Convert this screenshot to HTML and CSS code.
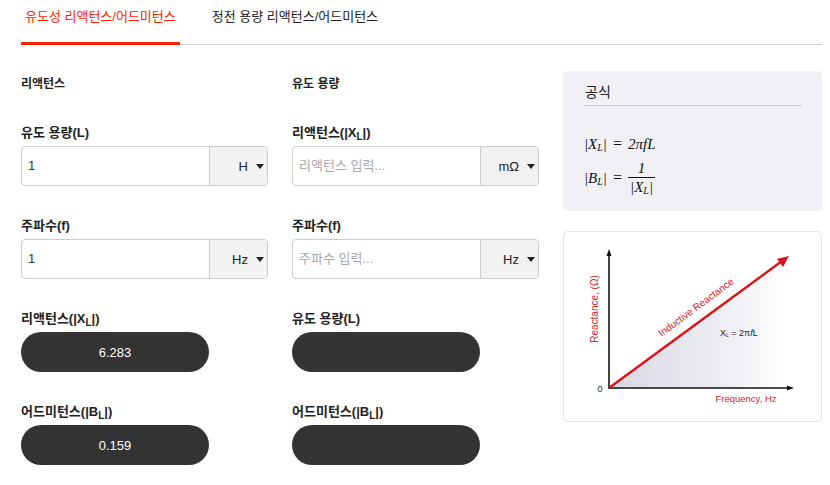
FILE: index.html
```html
<!DOCTYPE html>
<html lang="ko">
<head>
<meta charset="utf-8">
<title>유도성 리액턴스/어드미턴스</title>
<link rel="stylesheet" href="styles.css">
</head>
<body>
<div class="page">
  <nav class="tabs">
    <a class="tab active">유도성 리액턴스/어드미턴스</a>
    <a class="tab">정전 용량 리액턴스/어드미턴스</a>
  </nav>
  <div class="main">
    <div class="calc">
      <div class="col">
        <div class="heading">리액턴스</div>
        <div class="field">
          <div class="label">유도 용량(L)</div>
          <div class="control">
            <div class="input">1</div>
            <div class="select">H<span class="caret"></span></div>
          </div>
        </div>
        <div class="field">
          <div class="label">주파수(f)</div>
          <div class="control">
            <div class="input">1</div>
            <div class="select">Hz<span class="caret"></span></div>
          </div>
        </div>
        <div class="field">
          <div class="label">리액턴스(|X<sub>L</sub>|)</div>
          <div class="pill">6.283</div>
        </div>
        <div class="field">
          <div class="label">어드미턴스(|B<sub>L</sub>|)</div>
          <div class="pill">0.159</div>
        </div>
      </div>
      <div class="col">
        <div class="heading">유도 용량</div>
        <div class="field">
          <div class="label">리액턴스(|X<sub>L</sub>|)</div>
          <div class="control">
            <div class="input placeholder">리액턴스 입력...</div>
            <div class="select">mΩ<span class="caret"></span></div>
          </div>
        </div>
        <div class="field">
          <div class="label">주파수(f)</div>
          <div class="control">
            <div class="input placeholder">주파수 입력...</div>
            <div class="select">Hz<span class="caret"></span></div>
          </div>
        </div>
        <div class="field">
          <div class="label">유도 용량(L)</div>
          <div class="pill"></div>
        </div>
        <div class="field">
          <div class="label">어드미턴스(|B<sub>L</sub>|)</div>
          <div class="pill"></div>
        </div>
      </div>
    </div>
    <aside class="side">
      <div class="card formula">
        <div class="card-title">공식</div>
        <div class="eq eq1"><span class="m">|X<sub>L</sub>|</span><span class="op">=</span><span class="m">2πfL</span></div>
        <div class="eq eq2"><span class="m">|B<sub>L</sub>|</span><span class="op">=</span><span class="frac"><span class="num m">1</span><span class="den m">|X<sub>L</sub>|</span></span></div>
      </div>
      <div class="card chart">
        <svg width="257" height="189" viewBox="0 0 257 189" xmlns="http://www.w3.org/2000/svg">
          <defs>
            <linearGradient id="g" x1="0" y1="0" x2="1" y2="0">
              <stop offset="0" stop-color="#d8d8e2"/>
              <stop offset="0.6" stop-color="#ececf2"/>
              <stop offset="1" stop-color="#ffffff"/>
            </linearGradient>
          </defs>
          <polygon points="45,156 222,26 222,156" fill="url(#g)"/>
          <line x1="45" y1="157" x2="45" y2="22" stroke="#111" stroke-width="1.6"/>
          <polygon points="45,17 42.5,24 47.5,24" fill="#111"/>
          <line x1="45" y1="156" x2="225" y2="156" stroke="#111" stroke-width="1.6"/>
          <polygon points="230,156 223,153.5 223,158.5" fill="#111"/>
          <line x1="45" y1="156" x2="218" y2="29" stroke="#d7141a" stroke-width="2.4"/>
          <polygon points="225,24 213,27 219,35" fill="#d7141a"/>
          <text x="34" y="77" transform="rotate(-90 34 77)" text-anchor="middle" class="red lg">Reactance, (Ω)</text>
          <text x="36" y="160" text-anchor="middle" class="blk">0</text>
          <text x="182" y="170" text-anchor="middle" class="red">Frequency, Hz</text>
          <text x="134" y="78" transform="rotate(-36.5 134 78)" text-anchor="middle" class="red lg">Inductive Reactance</text>
          <text x="156" y="104" class="blk">X<tspan font-size="5" dy="1">L</tspan><tspan dy="-1"> = 2π</tspan><tspan font-style="italic">f</tspan>L</text>
        </svg>
      </div>
    </aside>
  </div>
</div>
</body>
</html>
```

FILE: styles.css
```css
* { box-sizing: border-box; }
body {
  margin: 0;
  background: #fff;
  font-family: "Liberation Sans", Arial, "Noto Sans CJK KR", sans-serif;
  color: #222;
}
.page {
  padding: 0 8px 0 21px;
}
.tabs {
  display: flex;
  gap: 28px;
  border-bottom: 1px solid #cfcfcf;
  height: 45px;
}
.tab {
  font-size: 13px;
  line-height: 34px;
  padding: 0 4px;
  color: #222;
  margin-bottom: -1px;
  border-bottom: 3px solid transparent;
}
.tab.active {
  color: #ff2200;
  border-bottom-color: #ff2200;
}
.main {
  display: flex;
  gap: 24px;
  padding-top: 26px;
}
.calc {
  display: grid;
  grid-template-columns: 247px 247px;
  column-gap: 24px;
  padding-top: 4px;
}
.heading {
  font-size: 12px;
  font-weight: bold;
  line-height: 18px;
}
.field {
  margin-top: 31px;
}
.label {
  font-size: 13px;
  font-weight: bold;
  line-height: 18px;
  margin-bottom: 4px;
}
.label sub {
  font-size: 10px;
  vertical-align: -3px;
  line-height: 0;
}
.control {
  display: flex;
  height: 40px;
  border: 1px solid #cccccc;
  border-radius: 4px;
  overflow: hidden;
}
.input {
  flex: 1;
  padding-left: 6px;
  font-size: 13px;
  line-height: 38px;
  color: #333;
}
.input.placeholder {
  color: #a8a8a8;
}
.select {
  width: 58px;
  background: #f2f2f2;
  border-left: 1px solid #cccccc;
  display: flex;
  align-items: center;
  justify-content: flex-end;
  padding-right: 3px;
  font-size: 13px;
  color: #222;
}
.caret {
  width: 0;
  height: 0;
  border-left: 4px solid transparent;
  border-right: 4px solid transparent;
  border-top: 5px solid #222;
  margin-left: 8px;
}
.pill {
  width: 188px;
  height: 40px;
  border-radius: 20px;
  background: #333333;
  color: #fff;
  font-size: 13px;
  display: flex;
  align-items: center;
  justify-content: center;
}
.side {
  width: 259px;
  display: flex;
  flex-direction: column;
  gap: 20px;
}
.card {
  border-radius: 5px;
}
.formula {
  background: #f0f0f5;
  height: 140px;
  padding: 10px 20px 0 21px;
}
.card-title {
  font-size: 14px;
  line-height: 22px;
  padding-left: 1px;
  padding-bottom: 2px;
  border-bottom: 1px solid #cfcfd4;
  color: #222;
}
.eq {
  font-family: "Liberation Serif", "Times New Roman", serif;
  font-size: 15px;
  color: #111;
  display: flex;
  align-items: center;
  gap: 6px;
}
.eq .m { font-style: italic; }
.eq .op { font-size: 16px; }
.eq sub { font-size: 10px; vertical-align: -2px; line-height: 0; }
.eq1 { margin-top: 28px; height: 20px; }
.eq2 { margin-top: 5px; }
.frac {
  display: inline-flex;
  flex-direction: column;
  align-items: center;
}
.num { line-height: 18px; padding: 0 4px; }
.den { border-top: 1px solid #111; line-height: 19px; padding: 0 2px; }
.chart {
  height: 191px;
  border: 1px solid #e4e4e8;
  background: #fff;
}
.chart svg { display: block; }
.red { fill: #d7232b; font-family: "Liberation Sans", Arial, sans-serif; font-size: 9.5px; }
.lg { font-size: 10px; }
.blk { fill: #222; font-family: "Liberation Sans", Arial, sans-serif; font-size: 9px; }
```
